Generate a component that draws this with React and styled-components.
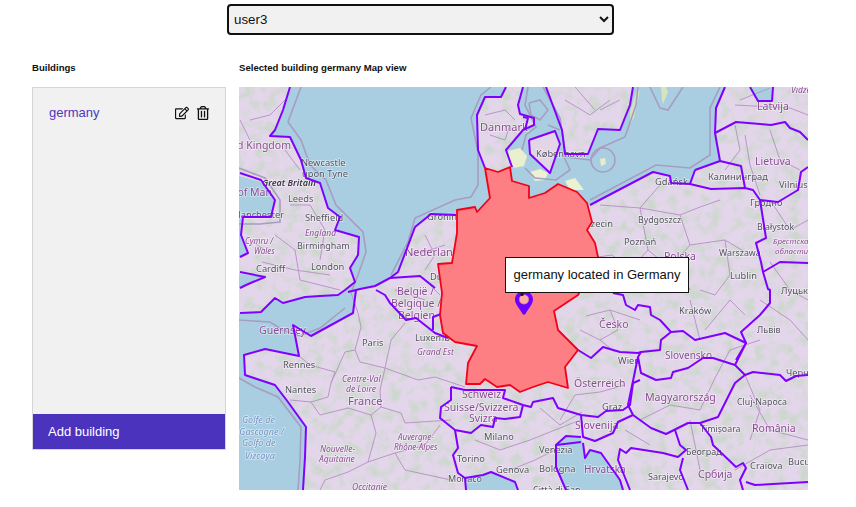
import React from "react";
import styled, { createGlobalStyle } from "styled-components";
import { FaRegEdit, FaRegTrashAlt } from "react-icons/fa";

const Global = createGlobalStyle`
  html, body { margin: 0; padding: 0; background: #fff; font-family: "Liberation Sans", Arial, sans-serif; }
`;
const Page = styled.div`
  width: 856px; height: 507px; overflow: hidden; box-sizing: border-box; padding-top: 4px;
`;
const SelectRow = styled.div`
  width: 840px; display: flex; padding-left: 227px; box-sizing: border-box;
`;
const UserSelect = styled.select`
  width: 387px; height: 31px; box-sizing: border-box; border: 2px solid #111; border-radius: 4px;
  background: #f1f1f1; color: #111; font: 13.33px "Liberation Sans", Arial, sans-serif; padding: 0 1px;
`;
const Columns = styled.div`
  display: grid; grid-template-columns: 194px 569px; column-gap: 13px; margin: 26px 0 0 32px;
`;
const Heading = styled.h4`
  margin: 0 0 12px; height: 14px; font-size: 9.6px; line-height: 14px; font-weight: 700; color: #111;
`;
const Panel = styled.div`
  height: 363px; box-sizing: border-box; border: 1px solid #d6d6d6; background: #f1f1f1;
  display: flex; flex-direction: column; justify-content: space-between;
`;
const Item = styled.div`
  display: flex; align-items: center; justify-content: space-between; padding: 15px 15px 0 16px;
  height: 20px;
`;
const ItemName = styled.a`
  color: #4b38bf; font-size: 13px; line-height: 18px;
`;
const ItemActions = styled.div`
  display: flex; align-items: center; gap: 7px; color: #111; font-size: 14px; line-height: 0;
`;
const AddButton = styled.div`
  height: 35px; background: #4c33bd; color: #fff; font-size: 13px; line-height: 36px; padding-left: 15px;
`;
const MapBox = styled.div`
  position: relative; width: 569px; height: 403px; overflow: hidden; background: #e1d5e8;
`;
const MapSvg = styled.svg`
  display: block; width: 569px; height: 403px;
`;
const Tooltip = styled.div`
  position: absolute; left: 266px; top: 170px; width: 184px; height: 36px; box-sizing: border-box;
  border: 1px solid #111; background: #fff; color: #111; font-size: 13px; line-height: 34px;
  text-align: center; white-space: nowrap;
`;
const Label = styled.text`
  font-family: "Noto Sans", "DejaVu Sans", sans-serif;
  font-size: ${p => p.$size}px;
  font-style: ${p => (p.$italic ? "italic" : "normal")};
  font-weight: ${p => (p.$bold ? 600 : 400)};
  fill: ${p => p.$color};
  paint-order: stroke; stroke: rgba(255,255,255,.5); stroke-width: 1.5px;
`;

const SEA = [
  "291,87 283,110 275,130 270,136 290,137 301,160 306,178 320,183 328,208 340,217 335,230 359,237 358,255 350,268 355,282 345,290 338,295 320,296 305,297 283,303 275,298 261,312 240,313 239,313 239,490 303,490 305,457 306,427 288,402 275,385 245,375 244,355 265,349 299,356 293,325 311,336 353,313 356,290 375,287 390,278 398,272 415,227 431,214 456,215 457,210 475,207 477,212 490,198 485,168 478,150 477,115 485,97 501,97 506,87",
  "523,87 546,87 562,130 565,154 588,154 598,129 620,130 630,105 633,87 725,87 716,108 715,133 720,161 695,170 690,184 671,183 670,176 653,172 590,205 587,203 577,192 558,184 545,193 529,198 529,186 512,181 510,167 512,167 506,150 510,145 523,130 534,125 534,118 520,114 518,105",
  "750,87 758,101 772,101 773,87",
  "239,176 261,182 275,200 271,217 243,217 241,235 248,253 239,257",
  "239,274 265,277 246,285 239,288",
  "556,445 566,436 580,437 583,443 585,458 590,450 601,453 620,480 623,490 566,490 556,467",
  "466,490 465,478 483,475 491,472 515,482 518,490",
];
const ISLANDS = [
  ["529,140 555,131 560,144 550,173 530,154", "#e2d5e6"],
  ["508,151 520,148 527,156 524,166 514,168 509,160", "#eaf0cf"],
  ["530,172 540,169 548,173 545,180 535,181", "#ecf1cf"],
  ["636,92 640,90 634,118 630,124 630,112", "#d3e2b8"],
  ["661,87 666,87 668,92 663,104 662,100", "#d7e4bd"],
  ["600,159 605,158 606,164 601,166", "#e6edc8"],
  ["565,181 575,178 584,190 570,190", "#ecf1cf"],
];
const WATERLINES = [
  "301,87 288,122 301,140 310,165 326,180 336,205 363,232 366,252 358,275 352,290",
  "391,275 408,242 415,218 455,200 471,197 478,185 478,152 471,118 481,95 491,87",
  "590,200 656,165 690,168 710,155 710,108 720,87",
  "543,87 560,118 566,157 590,160 600,148 625,137 636,105 638,87",
  "650,87 660,108 668,110 683,87",
  "239,378 255,387 278,397 301,427 300,460 298,490",
  "239,320 270,322 283,330 300,336 320,328 345,308",
  "239,224 260,224 280,222 280,200 265,178 239,168",
  "529,103 540,100 548,110 540,120 531,115 529,103",
  "528,87 525,105 536,127 526,135 522,150",
  "548,125 560,130",
  "525,168 535,178 556,180 570,170 563,155",
];
const ADMIN = [
  "358,313 361,327 355,350 345,352 331,383 328,397 311,402 320,415 348,408 371,415 376,433 368,462 348,472 325,480 320,490",
  "355,350 360,362 385,368 380,390 381,407 371,415",
  "385,368 391,340 405,323", "381,407 401,413 405,423 451,420",
  "385,368 418,380 435,377 465,387", "368,462 395,453 405,470 451,480",
  "299,356 310,365 335,372 331,383", "311,402 290,400",
  "350,290 358,313", "395,453 425,445 440,425",
  "640,208 680,215 700,207 720,200", "600,205 640,208 648,250 630,270 612,255 598,257",
  "640,208 660,185", "680,215 690,245 670,268 650,262", "690,245 725,240 745,252",
  "725,240 730,275 715,295 700,290", "680,268 690,290", "648,250 670,268",
  "586,316 610,310 618,330 600,340 580,330", "610,310 640,320", "600,340 615,352",
  "700,340 690,300", "705,330 730,300 745,315", "770,200 790,230 808,220", "770,262 790,290 808,300",
  "745,135 750,165 760,195", "735,125 740,150 725,170", "770,130 780,160 800,170",
  "560,420 575,395 600,392", "600,392 625,385", "540,408 560,425 582,412",
  "640,420 670,405 700,410 715,378", "715,378 730,350 760,340", "750,395 770,430 808,440", "745,375 760,410 750,440",
  "530,440 555,430 580,420", "475,440 500,450 530,440", "510,470 535,460 555,450",
  "625,430 650,445", "690,420 700,470", "735,470 770,450 808,445", "760,300 790,320 808,340",
  "485,115 505,110 515,120", "490,135 505,140 510,125",
  "565,100 590,115 610,100", "575,87 595,110", "600,110 620,100",
  "250,120 270,115 285,100", "250,140 240,120", "285,150 300,170", "290,205 310,205 325,230 320,260",
  "275,235 295,250 300,280", "262,262 295,270 330,275", "300,280 340,290", "250,240 265,250",
  "425,235 435,255 425,270", "410,255 430,250 445,245", "430,285 440,295", "395,290 425,300",
  "740,100 770,88", "735,105 790,108 808,115",
];
const BORDERS = [
  "290,87 283,110 275,130 270,136 290,137 301,160 306,178 320,183 328,208 340,217 335,230 359,237 358,255 350,268 355,282 345,290 338,295 320,296 305,297 283,303 275,298 261,312 240,313",
  "240,173 261,180 275,200 271,217 243,217 241,235 248,253 240,257",
  "240,272 265,277 246,285 240,288",
  "356,290 353,313 311,336 293,325 299,356 265,349 244,355 245,375 275,385 288,402 306,427 305,457 303,490",
  "348,292 360,289 375,286 390,278 398,272 415,227 431,214 456,215",
  "390,278 420,276 435,288", "376,290 385,295 390,303 406,320 416,318 435,333 448,338",
  "433,330 433,317 441,314",
  "451,387 465,390 505,390 503,398 523,405 531,407 533,402 553,398 558,408 581,415 598,417 606,411 623,410 630,405 633,383 640,380",
  "451,387 451,400 441,407 440,418 455,430 471,433 481,425 493,427 495,418 505,419 520,417 523,405",
  "455,430 458,448 453,455 458,473 465,478 466,490", "465,478 483,475 491,472 515,482 518,490",
  "578,350 591,358 603,347 620,352 638,353 641,352 660,350 661,340 671,332 660,320 651,315 650,307 638,305 635,310 626,305 623,295 613,293",
  "671,332 683,331 695,340 725,333 746,343 741,332 760,315 770,303 770,290 768,289 763,272 761,262 756,243 766,238 760,200 753,190 745,188 711,189 690,184 671,183 670,176 653,172 590,205",
  "638,357 641,373 656,380 671,378 673,372 688,368 703,358 713,358 735,365 746,343 736,360",
  "641,352 638,357 628,405 633,415 651,428 666,434 688,423 700,423 718,417 735,383 745,375 735,365",
  "745,375 753,372 780,375 786,381 796,376 808,375",
  "581,415 583,437 595,441 613,433 618,422 633,415",
  "583,443 585,458 590,450 601,453 620,480 623,490", "581,442 556,445 556,467 566,490", "556,445 566,436 581,437",
  "675,430 680,445 686,450 678,457 663,453 631,448 626,453 620,449 618,460 630,490", "683,458 680,470 688,490",
  "700,423 711,437 713,445 736,467 743,463 746,468 740,480 743,490", "746,482 755,485 808,482",
  "546,87 562,130 565,154 588,154 598,129 620,130 630,105 633,87",
  "529,140 555,131 560,144 550,173 530,154 529,140", "523,117 528,118 525,130",
  "506,87 501,97 485,97 477,115 478,150 485,168",
  "523,87 518,105 520,114 534,118 534,125 523,130 506,150 512,167",
  "695,170 720,161 741,166 745,188", "690,184 695,170",
  "725,87 716,108 715,133 720,161", "715,133 736,122 771,125 785,122 790,128 800,132 808,140",
  "750,87 758,101 772,101 773,87",
  "760,200 778,202 798,190 801,172 808,167", "763,272 780,262 808,263",
];
const GERMANY = "485,168 498,172 510,167 512,181 529,186 529,198 545,193 558,184 577,192 587,203 592,222 587,230 595,243 598,257 578,295 554,311 558,330 578,350 565,367 568,388 548,382 533,387 520,392 510,385 497,387 485,379 480,384 466,384 468,363 477,346 455,342 443,333 440,315 442,293 438,264 452,263 457,233 457,210 475,207 477,212 490,198";

const P = "#8b4b93", C = "#55535f", S = "#7393c4";
const LABELS = [
  ["United Kingdom", 291, 149, P, 10.5, "end"], ["Newcastle", 301, 166, C, 9.3], ["upon Tyne", 302, 177, C, 9.3],
  ["Great Britain", 262, 186, "#3c3846", 9, "start", true, true], ["Isle of Man", 272, 196, P, 10.5, "end"], ["Leeds", 288, 202, C, 9.3],
  ["Manchester", 284, 218, C, 9.3, "end"], ["Sheffield", 305, 221, C, 9.3], ["England", 305, 236, P, 8.5, "start", true],
  ["Cymru /", 245, 244, P, 8, "start", true], ["Wales", 254, 254, P, 8, "start", true], ["Birmingham", 297, 249, C, 9],
  ["Cardiff", 256, 272, C, 9.3], ["London", 311, 270, C, 9.3], ["Danmark", 480, 131, P, 11],
  ["Groningen", 427, 220, C, 9.3], ["Nederland", 405, 256, P, 11], ["Düsseldorf", 430, 280, C, 9.3],
  ["België /", 397, 295, P, 10.5], ["Belgique /", 391, 307, P, 10.5], ["Belgien", 398, 319, P, 10.5],
  ["Guernsey", 259, 334, P, 10.5], ["Paris", 362, 346, C, 9.3], ["Luxembourg", 415, 341, C, 9.3],
  ["Grand Est", 417, 355, P, 8.5, "start", true], ["Rennes", 283, 368, C, 9.3], ["Centre-Val", 342, 382, P, 8.5, "start", true],
  ["de Loire", 346, 392, P, 8.5, "start", true], ["Nantes", 285, 393, C, 9.3], ["France", 348, 405, P, 11],
  ["Schweiz", 462, 398, P, 10.5], ["Suisse/Svizzera", 444, 411, P, 10.5], ["Svizra", 469, 422, P, 10.5],
  ["Golfe de", 242, 423, S, 9, "start", true], ["Gascogne /", 284, 435, S, 9, "end", true], ["Golfo de", 242, 446, S, 9, "start", true],
  ["Vizcaya", 245, 459, S, 9, "start", true], ["Nouvelle-", 320, 452, P, 8.5, "start", true], ["Aquitaine", 319, 462, P, 8.5, "start", true],
  ["Auvergne-", 398, 440, P, 8, "start", true], ["Rhône-Alpes", 394, 450, P, 8, "start", true], ["Milano", 484, 440, C, 9.3],
  ["Torino", 457, 462, C, 9.3], ["Genova", 496, 473, C, 9.3], ["Monaco", 448, 482, C, 9], ["Occitanie", 352, 490, P, 8.5, "start", true],
  ["Latvija", 757, 110, P, 10.5], ["København", 536, 157, C, 9.3], ["Lietuva", 755, 165, P, 10.5], ["Калининград", 708, 180, C, 9.3],
  ["Gdańsk", 655, 185, C, 9.3], ["Vilnius", 779, 188, C, 9.3], ["Гродно", 750, 206, C, 9.3], ["Szczecin", 613, 227, C, 9.3, "end"],
  ["Bydgoszcz", 638, 223, C, 8.8], ["Białystok", 757, 230, C, 8.8], ["Брестская", 773, 244, P, 8, "start", true], ["области", 775, 254, P, 8, "start", true],
  ["Poznań", 624, 245, C, 9.3], ["Warszawa", 719, 256, C, 8.8], ["Polska", 664, 260, P, 10.5], ["Lublin", 730, 279, C, 9.3],
  ["Vidzeme", 791, 93, P, 8.5, "start", true], ["Česko", 599, 328, P, 10.5], ["Kraków", 679, 314, C, 9.3], ["Львів", 757, 333, C, 9],
  ["Slovensko", 665, 359, P, 10], ["Wien", 618, 364, C, 9.3], ["Österreich", 574, 387, P, 10.5], ["Magyarország", 645, 401, P, 10.6],
  ["Cluj-Napoca", 737, 405, C, 8.8], ["Graz", 602, 410, C, 9.3], ["Slovenija", 575, 429, P, 10.5], ["Timișoara", 700, 432, C, 8.8],
  ["România", 752, 432, P, 10.5], ["Venezia", 539, 453, C, 9.3], ["Bologna", 539, 472, C, 9.3], ["Hrvatska", 584, 473, P, 10],
  ["Београд", 686, 455, C, 9], ["Craiova", 750, 469, C, 9.3], ["București", 788, 465, C, 9.3], ["Sarajevo", 648, 480, C, 9],
  ["Србија", 698, 478, P, 10.5], ["Чернівці", 786, 376, C, 9.3], ["Луцьк", 781, 294, C, 9.3], ["Città di San", 533, 493, C, 9],
];

function OsmMap() {
  return (
    <MapSvg viewBox="239 87 569 403" aria-label="Map view">
      <defs>
        <filter id="veg" x="0" y="0" width="100%" height="100%" colorInterpolationFilters="sRGB">
          <feTurbulence type="fractalNoise" baseFrequency="0.09" numOctaves="3" seed="11" />
          <feColorMatrix values="0 0 0 0 0.70  0 0 0 0 0.85  0 0 0 0 0.67  0 3 0 0 -1.3" />
          <feGaussianBlur stdDeviation="0.5" />
        </filter>
        <filter id="soft" colorInterpolationFilters="sRGB"><feGaussianBlur stdDeviation="0.4" /></filter>
      </defs>
      <g filter="url(#soft)">
        <rect x="239" y="87" width="569" height="403" fill="#e3d6ea" />
        <rect x="239" y="87" width="569" height="403" filter="url(#veg)" opacity="0.45" />
        {SEA.map((p, i) => <polygon key={i} points={p} fill="#a9cee2" />)}
        {ISLANDS.map(([p, c], i) => <polygon key={i} points={p} fill={c} />)}
        {ADMIN.map((p, i) => <polyline key={i} points={p} fill="none" stroke="#b996c6" strokeWidth="1" />)}
        {WATERLINES.map((p, i) => <polyline key={i} points={p} fill="none" stroke="#a79dc0" strokeWidth="1.6" />)}
        <ellipse cx="603" cy="160" rx="12" ry="12" fill="none" stroke="#a79dc0" strokeWidth="1.6" />
        {LABELS.map(([t, x, y, c, s, a, it, b]) => (
          <Label key={t} x={x} y={y} $color={c} $size={s} $italic={it} $bold={b} textAnchor={a || "start"}>{t}</Label>
        ))}
        {BORDERS.map((p, i) => <polyline key={i} points={p} fill="none" stroke="#8000ff" strokeWidth="2" strokeLinejoin="round" />)}
      </g>
      <polygon points={GERMANY} fill="#fd7f83" stroke="#f4001a" strokeWidth="1.8" strokeLinejoin="round" />
      <path fillRule="evenodd" fill="#6a00ff"
        d="M524 291c-5.2 0-9 3.7-9 8.6 0 4.6 4.6 9.2 7.6 14.3.6 1 2.2 1 2.8 0 3-5.100 7.600-9.700 7.600-14.300 0-4.900-3.800-8.600-9-8.600zm0 3.500a5 5 0 1 1 0 10 5 5 0 0 1 0-10z" />
      <circle cx="524" cy="299.500" r="4" fill="#fbaea6" />
      <circle cx="522" cy="294.500" r="1.600" fill="#111" />
    </MapSvg>
  );
}

export default function App() {
  return (
    <Page>
      <Global />
      <SelectRow>
        <UserSelect defaultValue="user3">
          <option value="user3">user3</option>
        </UserSelect>
      </SelectRow>
      <Columns>
        <div>
          <Heading>Buildings</Heading>
          <Panel>
            <Item>
              <ItemName>germany</ItemName>
              <ItemActions><FaRegEdit /><FaRegTrashAlt /></ItemActions>
            </Item>
            <AddButton>Add building</AddButton>
          </Panel>
        </div>
        <div>
          <Heading>Selected building germany Map view</Heading>
          <MapBox>
            <OsmMap />
            <Tooltip>germany located in Germany</Tooltip>
          </MapBox>
        </div>
      </Columns>
    </Page>
  );
}
